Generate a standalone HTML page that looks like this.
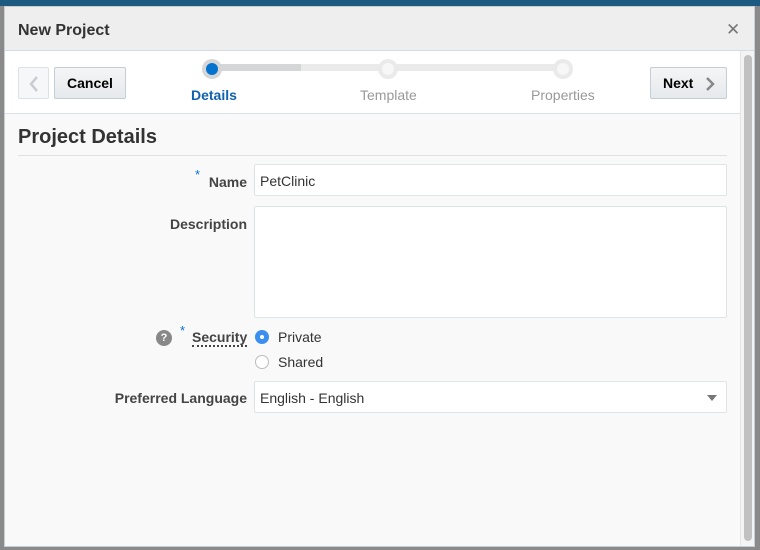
<!DOCTYPE html>
<html><head><style>
*{box-sizing:border-box;margin:0;padding:0}
body{width:760px;height:550px;background:#8a8a8a;font-family:"Liberation Sans",Arial,sans-serif;position:relative;overflow:hidden}
.top{position:absolute;left:0;top:0;width:760px;height:6px;background:#1d5a82}
.dlg{position:absolute;left:4px;top:6px;width:751px;height:541px;background:#f9f9f9;border:1px solid #c9ced3}
.hdr{position:absolute;left:0;top:0;width:749px;height:44px;background:#eeeeee;border-bottom:1px solid #d4dbe1}
.hdr .t{position:absolute;left:13px;top:15px;font-size:16px;font-weight:bold;color:#333}
.hdr .x{position:absolute;left:721px;top:13px;font-size:17px;color:#777}
.tb{position:absolute;left:0;top:44px;width:735px;height:63px;background:#fff;border-bottom:1px solid #dde1e4}
.btn{position:absolute;border:1px solid #c4ced7;border-radius:2px;background:linear-gradient(#f4f5f6,#e6e9ec);font-size:14px;font-weight:bold;color:#000}
.sb{position:absolute;left:735px;top:44px;width:14px;height:495px;background:#f4f4f4;border-left:1px solid #e4e4e4}
.sb i{position:absolute;left:3px;top:4px;width:8px;height:486px;border-radius:4px;background:#c1c1c1}
.lbl{position:absolute;font-size:14px;font-weight:bold;color:#444;text-align:right}
.in{position:absolute;background:#fff;border:1px solid #dfe4e7;border-radius:2px;font-size:14px;color:#333;padding:8px 5px}
.star{color:#0572ce;font-size:13px;position:absolute}
</style></head><body>
<div class="top"></div>
<div class="dlg">
 <div class="hdr"><div class="t">New Project</div><div class="x">✕</div></div>
 <div class="tb">
  <div class="btn" style="left:13px;top:16px;width:31px;height:32px;background:#f6f7f8;border-color:#dde2e6"><svg width="31" height="32"><path d="M18 9 L12 16 L18 23" stroke="#c9ccd0" stroke-width="2.5" fill="none"/></svg></div>
  <div class="btn" style="left:49px;top:16px;width:72px;height:32px;text-align:center;line-height:30px">Cancel</div>
  <div style="position:absolute;left:208px;top:13px;width:350px;height:7px;background:#eaeaea"></div>
  <div style="position:absolute;left:208px;top:13px;width:88px;height:7px;background:#d4d6d8"></div>
  <div style="position:absolute;left:197px;top:8px;width:20px;height:20px;border-radius:50%;background:#d4d6d8"></div>
  <div style="position:absolute;left:201px;top:12px;width:12px;height:12px;border-radius:50%;background:#0572ce"></div>
  <div style="position:absolute;left:373px;top:8px;width:20px;height:20px;border-radius:50%;background:#eaeaea"></div>
  <div style="position:absolute;left:377px;top:12px;width:12px;height:12px;border-radius:50%;background:#f7f7f7"></div>
  <div style="position:absolute;left:548px;top:8px;width:20px;height:20px;border-radius:50%;background:#eaeaea"></div>
  <div style="position:absolute;left:552px;top:12px;width:12px;height:12px;border-radius:50%;background:#f7f7f7"></div>
  <div style="position:absolute;left:186px;top:36px;font-size:14px;font-weight:bold;color:#0f62b0">Details</div>
  <div style="position:absolute;left:355px;top:36px;font-size:14px;color:#999">Template</div>
  <div style="position:absolute;left:526px;top:36px;font-size:14px;color:#999">Properties</div>
  <div class="btn" style="left:645px;top:16px;width:77px;height:32px;line-height:30px;padding-left:12px">Next<svg style="position:absolute;left:52px;top:8px" width="14" height="16"><path d="M4 2 L10 8 L4 14" stroke="#888" stroke-width="2.5" fill="none"/></svg></div>
 </div>
 <div style="position:absolute;left:13px;top:119px;font-size:20px;font-weight:bold;color:#333">Project Details</div>
 <div style="position:absolute;left:13px;top:148px;width:709px;height:1px;background:#dde1e4"></div>
 <span class="star" style="left:190px;top:160px">*</span>
 <div class="lbl" style="left:100px;top:167px;width:142px">Name</div>
 <div class="in" style="left:249px;top:157px;width:473px;height:32px">PetClinic</div>
 <div class="lbl" style="left:100px;top:209px;width:142px">Description</div>
 <div class="in" style="left:249px;top:199px;width:473px;height:112px"></div>
 <div style="position:absolute;left:151px;top:323px;width:16px;height:16px;border-radius:50%;background:#888;color:#fff;font-size:11px;font-weight:bold;text-align:center;line-height:16px">?</div>
 <span class="star" style="left:175px;top:316px">*</span>
 <div class="lbl" style="left:187px;top:323px;border-bottom:2px dotted #444;line-height:15px">Security</div>
 <div style="position:absolute;left:250px;top:323px;width:14px;height:14px;border-radius:50%;background:#3a8ff0"></div>
 <div style="position:absolute;left:255px;top:328px;width:4px;height:4px;border-radius:50%;background:#fff"></div>
 <div style="position:absolute;left:273px;top:322px;font-size:14px;color:#333">Private</div>
 <div style="position:absolute;left:250px;top:348px;width:14px;height:14px;border-radius:50%;background:#fff;border:1px solid #bbb"></div>
 <div style="position:absolute;left:273px;top:347px;font-size:14px;color:#333">Shared</div>
 <div class="lbl" style="left:60px;top:383px;width:182px">Preferred Language</div>
 <div class="in" style="left:249px;top:374px;width:473px;height:32px">English - English<svg style="position:absolute;left:452px;top:13px" width="10" height="6"><path d="M0 0 H10 L5 6Z" fill="#777"/></svg></div>
 <div class="sb"><i></i></div>
</div>
</body></html>
